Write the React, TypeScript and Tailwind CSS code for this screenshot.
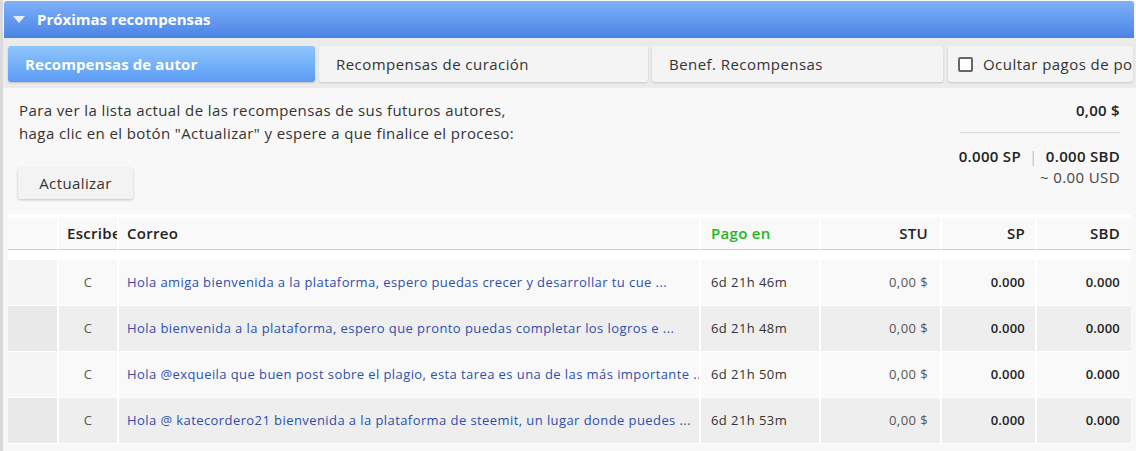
const rows = [
  {
    text: "Hola amiga bienvenida a la plataforma, espero puedas crecer y desarrollar tu cue ...",
    time: "6d 21h 46m",
  },
  {
    text: "Hola bienvenida a la plataforma, espero que pronto puedas completar los logros e ...",
    time: "6d 21h 48m",
  },
  {
    text: "Hola @exqueila que buen post sobre el plagio, esta tarea es una de las más importante ...",
    time: "6d 21h 50m",
  },
  {
    text: "Hola @ katecordero21 bienvenida a la plataforma de steemit, un lugar donde puedes ...",
    time: "6d 21h 53m",
  },
]

const cols = "grid grid-cols-[49px_60px_582px_120px_121px_95px_96px]"

export default function App() {
  return (
    <div
      className="w-[1136px] h-[451px] overflow-hidden bg-[#f8f8f8] border-l-[3px] border-[#dadada] flex flex-col text-[#333]"
      style={{ fontFamily: '"Open Sans", "Noto Sans", sans-serif' }}
    >
      {/* header */}
      <div className="ml-[1px] mr-[2px] mt-[1px] h-[37px] shrink-0 rounded-t-[3px] bg-gradient-to-b from-[#7eb0fa] to-[#4a84e4] flex items-center pl-[9px] gap-[12px]">
        <svg width="12" height="8" viewBox="0 0 12 8">
          <polygon points="0,0 12,0 6,7" fill="#e9eef8" />
        </svg>
        <span className="text-white font-bold text-[15px]">Próximas recompensas</span>
      </div>

      {/* tabs */}
      <div className="bg-[#ebebeb] pt-[8px] pb-[6px] pl-[5px] flex gap-[4px] overflow-hidden shrink-0">
        <div className="w-[307px] h-[36px] shrink-0 rounded-[3px] bg-gradient-to-b from-[#90c6fc] to-[#5b9bf4] shadow-[0_1px_2px_rgba(0,0,0,0.2)] flex items-center pl-[17px] text-white font-bold text-[15px] tracking-[0.1px]">
          Recompensas de autor
        </div>
        <div className="w-[329px] h-[36px] shrink-0 rounded-[3px] bg-[#f4f4f4] shadow-[0_1px_2px_rgba(0,0,0,0.15)] flex items-center pl-[17px] text-[15px] tracking-[0.45px] text-[#333]">
          Recompensas de curación
        </div>
        <div className="w-[291px] h-[36px] shrink-0 rounded-[3px] bg-[#f4f4f4] shadow-[0_1px_2px_rgba(0,0,0,0.15)] flex items-center pl-[17px] text-[15px] tracking-[0.45px] text-[#333]">
          Benef. Recompensas
        </div>
        <div className="w-[185px] h-[36px] shrink-0 ml-[1px] rounded-[3px] bg-[#f4f4f4] shadow-[0_1px_2px_rgba(0,0,0,0.15)] flex items-center pl-[10px] gap-[10px] text-[15px] tracking-[0.45px] text-[#333] whitespace-nowrap overflow-hidden">
          <span className="w-[15px] h-[15px] shrink-0 border-2 border-[#666] rounded-[2px] bg-white" />
          Ocultar pagos de post
        </div>
      </div>

      {/* info */}
      <div className="flex justify-between pt-[11px] pr-[16px]">
        <div className="pl-[15px]">
          <p className="pl-[1px] text-[15px] leading-[23px] tracking-[0.4px] text-[#333]">
            Para ver la lista actual de las recompensas de sus futuros autores,
            <br />
            haga clic en el botón "Actualizar" y espere a que finalice el proceso:
          </p>
          <button className="mt-[23px] w-[115px] h-[31px] rounded-[3px] bg-[#f3f3f3] shadow-[0_1px_3px_rgba(0,0,0,0.22)] text-[15px] tracking-[0.4px] text-[#333]">
            Actualizar
          </button>
        </div>
        <div className="flex flex-col items-end text-[15px]">
          <div className="leading-[23px] font-semibold tracking-[0.3px] text-[#222]">0,00 $</div>
          <div className="w-[160px] mt-[10px] border-b border-[#d8d8d8]" />
          <div className="mt-[13px] leading-[21px] font-semibold tracking-[0.3px] text-[#222]">
            0.000 SP <span className="mx-[4px] font-normal text-[#b8c0d0]">|</span> 0.000 SBD
          </div>
          <div className="leading-[21px] tracking-[0.4px] text-[#444]">~ 0.00 USD</div>
        </div>
      </div>

      {/* table */}
      <div className="mt-[15px] ml-[5px] w-[1123px] bg-white rounded-t-[3px] pt-[4px]">
        <div className={`${cols} h-[32px] text-[15px] font-semibold tracking-[0.3px] text-[#222]`}>
          <div className="bg-[#f9f9f9] border-b border-[#cfcfcf]" />
          <div className="bg-[#f9f9f9] border-b border-[#cfcfcf] border-l-2 border-l-white flex items-center pl-[8px] whitespace-nowrap">
            Escribe
          </div>
          <div className="bg-[#f9f9f9] border-b border-[#cfcfcf] border-l-2 border-l-white flex items-center pl-[8px]">
            Correo
          </div>
          <div className="bg-[#f9f9f9] border-b border-[#cfcfcf] border-l-2 border-l-white flex items-center pl-[10px] text-[#22b722]">
            Pago en
          </div>
          <div className="bg-[#f9f9f9] border-b border-[#cfcfcf] border-l-2 border-l-white flex items-center justify-end pr-[12px]">
            STU
          </div>
          <div className="bg-[#f9f9f9] border-b border-[#cfcfcf] border-l-2 border-l-white flex items-center justify-end pr-[10px]">
            SP
          </div>
          <div className="bg-[#f9f9f9] border-b border-[#cfcfcf] border-l-2 border-l-white flex items-center justify-end pr-[11px]">
            SBD
          </div>
        </div>
        <div className="mt-[10px]">
          {rows.map((r, i) => {
            const bg = i % 2 === 0 ? "bg-[#f9f9f9]" : "bg-[#eeeeee]"
            return (
              <div key={i} className={`${cols} h-[46px] border-b border-white text-[13px] tracking-[0.42px]`}>
                <div className={i % 2 === 0 ? "bg-[#f5f5f5]" : "bg-[#e9e9e9]"} />
                <div className={`${bg} border-l-2 border-white flex items-center justify-center text-[#555]`}>C</div>
                <div className={`${bg} border-l-2 border-white flex items-center pl-[8px] pr-[2px] overflow-hidden whitespace-nowrap text-[#2d4fae]`}>
                  {r.text}
                </div>
                <div className={`${bg} border-l-2 border-white flex items-center pl-[10px] text-[#333]`}>{r.time}</div>
                <div className={`${bg} border-l-2 border-white flex items-center justify-end pr-[12px] text-[#555]`}>0,00 $</div>
                <div className={`${bg} border-l-2 border-white flex items-center justify-end pr-[10px] font-semibold tracking-[0.2px] text-[#222]`}>0.000</div>
                <div className={`${bg} border-l-2 border-white flex items-center justify-end pr-[11px] font-semibold tracking-[0.2px] text-[#222]`}>0.000</div>
              </div>
            )
          })}
        </div>
      </div>
    </div>
  )
}
